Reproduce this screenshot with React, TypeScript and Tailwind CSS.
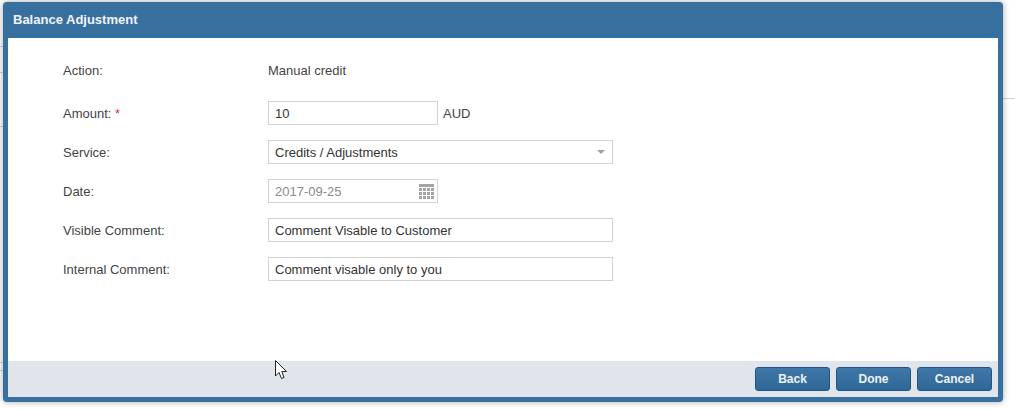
import React from "react";

function Row({ label, required, children }: { label: string; required?: boolean; children: React.ReactNode }) {
  return (
    <div className="flex h-6 items-center">
      <div className="w-[205px] shrink-0 pt-[2px] text-[#444]">
        {label}
        {required && <span className="text-[#e8303a]"> *</span>}
      </div>
      {children}
    </div>
  );
}

function Field({ value, wide, muted, children }: { value: string; wide?: boolean; muted?: boolean; children?: React.ReactNode }) {
  return (
    <div className={`flex h-6 items-center justify-between border border-[#d2d2d2] bg-white pl-[6px] ${wide ? "w-[345px]" : "w-[170px]"} ${muted ? "text-[#8a8a8a]" : "text-[#333]"}`}>
      <span className="pt-[2px]">{value}</span>
      {children}
    </div>
  );
}

function Btn({ label }: { label: string }) {
  return (
    <button className="h-6 w-[75px] rounded-[3px] border border-[#1f5687] bg-gradient-to-b from-[#3f77a8] to-[#2f6797] text-xs font-bold text-[#eef2f6]">
      {label}
    </button>
  );
}

function CalendarIcon() {
  const cells: React.ReactNode[] = [];
  for (let r = 0; r < 3; r++) {
    for (let c = 0; c < 4; c++) {
      cells.push(<rect key={`${r}-${c}`} x={c * 4} y={4 + r * 4} width="3" height="3" fill="#a5a5a5" />);
    }
  }
  return (
    <svg width="15" height="15" viewBox="0 0 15 15" className="mr-[3px]">
      <rect x="0" y="0" width="15" height="3" fill="#a5a5a5" />
      {cells}
    </svg>
  );
}

export default function App() {
  return (
    <div className="relative h-[409px] w-[1015px] overflow-hidden bg-white font-['Liberation_Sans',Arial,sans-serif] text-[13px]">
      <div className="absolute left-[1000px] top-[98px] h-px w-[15px] bg-[#d0d0d0]" />
      <div className="absolute left-0 top-[46px] h-px w-[4px] bg-[#d0d0d0]" />
      <div className="absolute left-0 top-[72px] h-px w-[4px] bg-[#d0d0d0]" />
      <div className="absolute left-0 top-[126px] h-px w-[4px] bg-[#d0d0d0]" />
      <div className="absolute left-0 top-[362px] h-px w-[4px] bg-[#d0d0d0]" />
      <div className="absolute left-0 top-[370px] h-px w-[4px] bg-[#d0d0d0]" />

      <div className="absolute left-[3px] top-[2px] flex h-[400px] w-[1000px] flex-col rounded-[4px] bg-[#376f9f] px-[5px] pb-[5px] shadow-[0_0_6px_rgba(0,0,0,0.35)]">
        <div className="flex h-[36px] shrink-0 items-center pl-[5px] font-bold text-[#f2f5f8]">Balance Adjustment</div>
        <div className="flex min-h-0 flex-1 flex-col bg-white">
          <div className="flex flex-1 flex-col gap-[15px] pl-[55px] pt-5">
            <div className="mb-1">
              <Row label="Action:">
                <span className="pt-[2px] text-[#444]">Manual credit</span>
              </Row>
            </div>
            <Row label="Amount:" required>
              <Field value="10" />
              <span className="ml-[5px] pt-[2px] text-[#444]">AUD</span>
            </Row>
            <Row label="Service:">
              <Field value="Credits / Adjustments" wide>
                <span className="mr-[7px] h-0 w-0 border-x-[4px] border-t-[4px] border-x-transparent border-t-[#a0a0a0]" />
              </Field>
            </Row>
            <Row label="Date:">
              <Field value="2017-09-25" muted>
                <CalendarIcon />
              </Field>
            </Row>
            <Row label="Visible Comment:">
              <Field value="Comment Visable to Customer" wide />
            </Row>
            <Row label="Internal Comment:">
              <Field value="Comment visable only to you" wide />
            </Row>
          </div>
          <div className="flex h-[36px] shrink-0 items-center justify-end gap-[6px] bg-[#dfe5ea] pr-[6px]">
            <Btn label="Back" />
            <Btn label="Done" />
            <Btn label="Cancel" />
          </div>
        </div>
      </div>

      <svg className="absolute left-[275px] top-[360px]" width="14" height="20" viewBox="0 0 14 20">
        <path d="M0.5 0.5 V16 L4 12.5 L6.5 18.5 L9 17.5 L6.8 11.5 L11.5 11.5 Z" fill="#fff" stroke="#222" strokeWidth="1" />
      </svg>
    </div>
  );
}
